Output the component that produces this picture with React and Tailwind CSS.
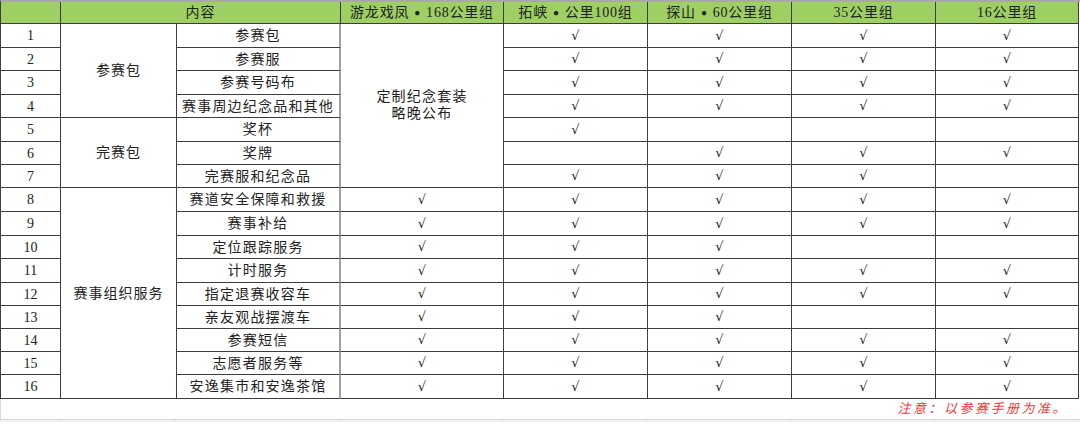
const cols = "grid-cols-[60px_116px_164px_163px_144px_144px_144px_143px]";

const rows = [
  { item: "参赛包", marks: "m1111" },
  { item: "参赛服", marks: "m1111" },
  { item: "参赛号码布", marks: "m1111" },
  { item: "赛事周边纪念品和其他", marks: "m1111" },
  { item: "奖杯", marks: "m1000" },
  { item: "奖牌", marks: "m0111" },
  { item: "完赛服和纪念品", marks: "m1110" },
  { item: "赛道安全保障和救援", marks: "11111" },
  { item: "赛事补给", marks: "11111" },
  { item: "定位跟踪服务", marks: "11100" },
  { item: "计时服务", marks: "11111" },
  { item: "指定退赛收容车", marks: "11111" },
  { item: "亲友观战摆渡车", marks: "11100" },
  { item: "参赛短信", marks: "11111" },
  { item: "志愿者服务等", marks: "11111" },
  { item: "安逸集市和安逸茶馆", marks: "11111" },
];

const groups = {
  0: { label: "参赛包", span: "row-span-4" },
  4: { label: "完赛包", span: "row-span-3" },
  7: { label: "赛事组织服务", span: "row-span-9" },
};

const headers = [
  ["游龙戏凤", "168公里组"],
  ["拓峡", "公里100组"],
  ["探山", "60公里组"],
  [null, "35公里组"],
  [null, "16公里组"],
];

const cell = "flex items-center justify-center border-r border-b border-[#3d3d3d]";

export default function App() {
  return (
    <div
      className="w-[1080px] h-[424px] bg-white text-[#222] overflow-hidden"
      style={{ fontFamily: '"Liberation Serif", "Noto Sans CJK SC", serif' }}
    >
      <div
        className={`grid ${cols} grid-rows-[22px_24px_23px_24px_23px_24px_23px_23px_24px_24px_23px_24px_23px_23px_23px_23px_24px] border-t-2 border-t-[#a8a8a8] border-l border-l-[#3d3d3d] text-[14px]`}
      >
        <div className={`${cell} bg-[#9dcf62]`} />
        <div className={`${cell} col-span-2 bg-[#9dcf62] tracking-[1px]`}>内容</div>
        {headers.map(([a, b]) => (
          <div key={b} className={`${cell} bg-[#9dcf62] tracking-[0.8px]`}>
            {a && (
              <>
                {a}
                <span className="mx-[5px] text-[10px]">●</span>
              </>
            )}
            {b}
          </div>
        ))}

        {rows.map((r, i) => (
          <Row key={i} index={i} row={r} />
        ))}
      </div>

      <div className="h-[20px] border-l border-l-[#dcdcdc] flex items-center justify-end pr-[12px]">
        <span className="text-[13px] italic text-[#e8403a] tracking-[2.5px]">注意：以参赛手册为准。</span>
      </div>
      <div className={`grid ${cols} h-[3px] border-t border-t-[#d6d6d6] bg-[#f3f3f3]`}>
        {Array.from({ length: 8 }).map((_, i) => (
          <div key={i} className="border-r border-r-[#dedede]" />
        ))}
      </div>
    </div>
  );
}

function Row({ index, row }) {
  const group = groups[index];
  return (
    <>
      <div className={cell}>{index + 1}</div>
      {group && (
        <div className={`${cell} ${group.span} tracking-[1px]`}>{group.label}</div>
      )}
      <div className={`${cell} border-r-2 border-r-[#a0a0a0] tracking-[1.2px]`}>{row.item}</div>
      {index === 0 && (
        <div className={`${cell} row-span-7 flex-col leading-[17px] tracking-[1.2px] pb-[2px]`}>
          <span>定制纪念套装</span>
          <span>略晚公布</span>
        </div>
      )}
      {row.marks.split("").map((m, j) =>
        m === "m" ? null : (
          <div key={j} className={`${cell} text-[13px] font-['DejaVu_Sans',sans-serif]`}>
            {m === "1" ? "√" : ""}
          </div>
        )
      )}
    </>
  );
}
